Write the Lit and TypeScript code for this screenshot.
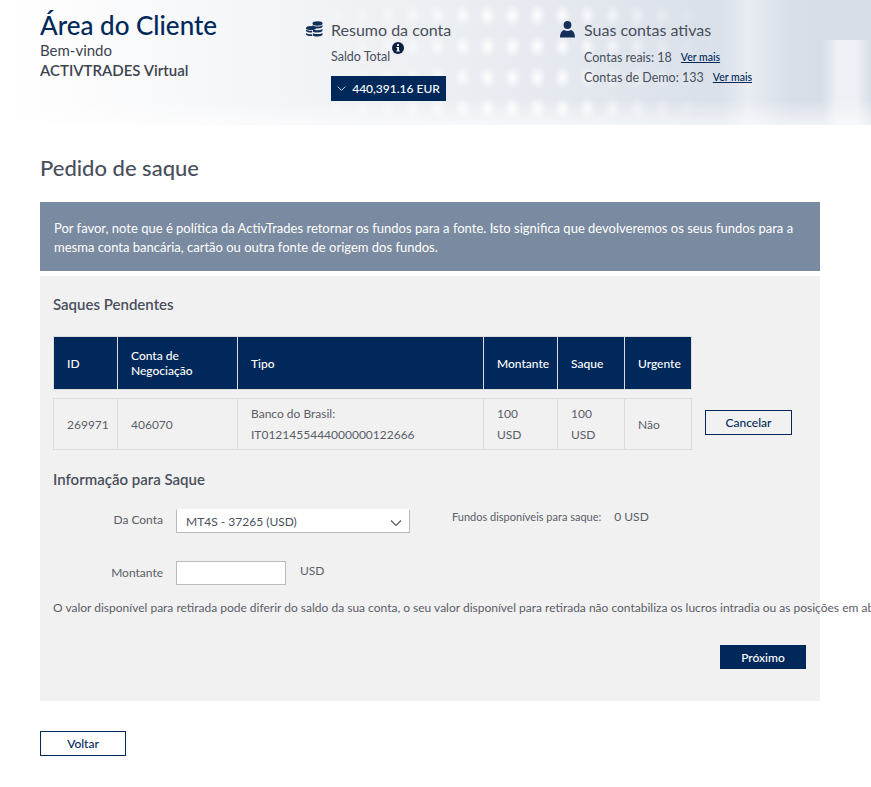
import {LitElement, css, html} from 'lit';
import {customElement} from 'lit/decorators.js';

const headers = ['ID', 'Conta de Negociação', 'Tipo', 'Montante', 'Saque', 'Urgente'];

@customElement('app-root')
export class AppRoot extends LitElement {
  static styles = css`
    :host {
      display: block;
      min-height: 787px;
      background: #fff;
      color: #4a4f5c;
      font-family: Lato, "Liberation Sans", sans-serif;
      font-size: 12px;
    }
    * { box-sizing: border-box; }

    .top {
      position: relative;
      height: 125px;
      padding: 10px 40px 0;
      display: flex;
      overflow: hidden;
      background:
        linear-gradient(90deg, transparent, rgba(255,255,255,.55) 30%, rgba(255,255,255,.55) 70%, transparent) 822px 40px / 50px 85px no-repeat,
        linear-gradient(90deg, transparent, rgba(255,255,255,.4) 40%, transparent) 720px 0 / 70px 125px no-repeat,
        linear-gradient(90deg, #fff 0, #f6f7f9 25%, #eef0f4 45%, #e6eaf0 62%, #dbe1ea 80%, #d6dde7 100%);
    }
    .dots {
      position: absolute;
      inset: 0 auto 0 300px;
      width: 420px;
      background-image: radial-gradient(ellipse 9px 12px at center, rgba(255,255,255,.9) 0, rgba(255,255,255,.35) 60%, transparent 100%);
      background-size: 25px 31px;
      -webkit-mask-image: linear-gradient(90deg, transparent, #000 45%, #000 60%, transparent);
      mask-image: linear-gradient(90deg, transparent, #000 45%, #000 60%, transparent);
    }
    .fade {
      position: absolute;
      inset: 100px 0 0 0;
      background: linear-gradient(180deg, transparent, rgba(255,255,255,.6));
    }
    .col { position: relative; }
    .welcome { width: 266px; }
    h1 {
      margin: 0;
      font-size: 26px;
      line-height: 30px;
      font-weight: 500;
      color: #00285a;
    }
    .welcome p { margin: 0; font-size: 15px; line-height: 20px; color: #3e4350; }
    .welcome p + p { font-weight: 600; }
    .welcome p:first-of-type { margin-top: 0; }

    .summary { width: 254px; padding-top: 9px; }
    .ct { display: flex; align-items: center; gap: 8px; height: 20px; font-size: 16px; color: #4a4f5c; }
    .ct svg { display: block; flex: none; }
    .sub { margin: 10px 0 0 25px; display: flex; font-size: 12.5px; line-height: 16px; }
    .info { margin: -7px 0 0 2px; }
    .balance {
      margin: 11px 0 0 25px;
      width: 115px;
      height: 25px;
      display: flex;
      align-items: center;
      justify-content: center;
      gap: 6px;
      background: #00285a;
      color: #fff;
      font-size: 12px;
      font-weight: 500;
    }
    .accounts { padding-top: 5px; }
    .accounts .ct { height: 28px; gap: 9px; }
    .accounts .line { margin: 0 0 0 24px; height: 20px; display: flex; align-items: center; gap: 9px; font-size: 12.5px; }
    .accounts .ct + .line { margin-top: 4px; }
    .accounts a { color: #00285a; font-size: 10.5px; font-weight: 500; text-decoration: underline; }

    main { padding: 30px 51px 0 40px; }
    h2 { margin: 0; font-size: 22px; line-height: 26px; font-weight: 500; color: #4a4f5c; }
    .notice {
      margin-top: 21px;
      height: 69px;
      padding: 17px 14px 0;
      background: #7a8aa0;
      color: #fff;
      font-size: 13px;
      line-height: 19px;
    }
    .panel {
      margin-top: 5px;
      height: 425px;
      padding: 19px 14px 0 13px;
      background: #f1f1f1;
    }
    h3 { margin: 0; font-size: 15px; line-height: 19px; font-weight: 600; color: #4a4f5c; }
    .pending {
      margin-top: 22px;
      display: grid;
      grid-template-columns: 65px 120px 246px 74px 67px 67px auto;
      grid-template-rows: 54px 52px;
      row-gap: 8px;
      justify-content: start;
    }
    .th, .td {
      display: flex;
      align-items: center;
      padding: 0 13px;
      margin-left: -1px;
      border: 1px solid #dcdcdc;
    }
    .th:first-child, .td.first { margin-left: 0; }
    .th { background: #00285a; color: #fff; font-weight: 500; line-height: 15px; }
    .td { line-height: 21px; color: #5a5e69; }
    .cancel {
      margin: 12px 0 0 13px;
      width: 87px;
      height: 25px;
      border: 1px solid #00285a;
      background: transparent;
      color: #00285a;
      font: 500 12px Lato, "Liberation Sans", sans-serif;
      padding: 0;
    }
    .info-title { margin-top: 20px; }
    .row { display: flex; align-items: flex-start; }
    .label { width: 110px; text-align: right; color: #5a5e69; }
    .account-row { margin-top: 20px; height: 24px; }
    .account-row .label { line-height: 22px; }
    .select {
      position: relative;
      margin-left: 13px;
      width: 234px;
      height: 24px;
      padding-left: 9px;
      display: flex;
      align-items: center;
      background: #fff;
      border: 1px solid #bbb;
      border-top-color: #fff;
      color: #4a4f5c;
    }
    .select svg { position: absolute; right: 7px; top: 7px; }
    .funds { margin-left: 42px; display: flex; gap: 13px; line-height: 16px; font-size: 11px; color: #5a5e69; }
    .funds b { font-weight: 400; font-size: 12px; }
    .amount-row { margin-top: 28px; height: 24px; }
    .amount-row .label { line-height: 24px; }
    .input { margin-left: 13px; width: 110px; height: 24px; background: #fff; border: 1px solid #bbb; }
    .currency { margin-left: 14px; line-height: 20px; color: #5a5e69; }
    .hint { margin: 15px 0 0; line-height: 16px; color: #5a5e69; white-space: nowrap; font-size: 12px; }
    .actions { margin-top: 29px; display: flex; justify-content: flex-end; }
    .next {
      width: 86px;
      height: 24px;
      border: 0;
      padding: 0;
      background: #00285a;
      color: #fff;
      font: 500 12px Lato, "Liberation Sans", sans-serif;
    }
    .back {
      display: block;
      margin-top: 30px;
      width: 86px;
      height: 25px;
      border: 1px solid #00285a;
      background: #fff;
      color: #00285a;
      font: 500 12px Lato, "Liberation Sans", sans-serif;
      padding: 0;
    }
  `;

  coins() {
    return html`<svg width="17" height="16" viewBox="0 0 17 16" fill="#14305a">
      <ellipse cx="11.5" cy="2.5" rx="5" ry="2.2"/>
      <path d="M6.5 4v1.6c0 1.1 2.2 2 5 2s5-.9 5-2V4c-1 1-3 1.5-5 1.5S7.500 5 6.500 4z"/>
      <path d="M7 8.200c1.200.7 2.800 1 4.500 1s3.600-.4 5-1.200v1.600c0 1.100-2.200 2-5 2-1.700 0-3.300-.3-4.500-.9z"/>
      <path d="M7 12.200c1.200.6 2.800.9 4.500.9s3.600-.4 5-1.200v1.700c0 1.100-2.200 2-5 2-1.700 0-3.300-.3-4.500-.9z"/>
      <ellipse cx="5" cy="7" rx="5" ry="2"/>
      <path d="M0 8.500v1.300c0 1 2.200 1.800 5 1.800.4 0 .8 0 1.200-.1V9.700c-.4.100-.8.100-1.200.1-2 0-4-.5-5-1.300z"/>
      <path d="M0 12v1.300c0 1 2.200 1.800 5 1.800.4 0 .8 0 1.200-.1v-1.800c-.4.100-.8.100-1.200.1-2 0-4-.5-5-1.300z"/>
    </svg>`;
  }

  user() {
    return html`<svg width="15" height="17" viewBox="0 0 15 17" fill="#14305a">
      <circle cx="7.500" cy="4" r="3.900"/>
      <path d="M0 16.500c0-4.200 1.800-7 4.200-7.500 1 .6 2.100.9 3.300.9s2.300-.3 3.300-.9c2.400.5 4.200 3.300 4.200 7.500z"/>
    </svg>`;
  }

  info() {
    return html`<svg class="info" width="12" height="12" viewBox="0 0 12 12">
      <circle cx="6" cy="6" r="6" fill="#0b1f45"/>
      <rect x="5" y="2.200" width="2" height="1.800" fill="#fff"/>
      <path d="M4.400 5h2.600v3.600h.8v1H4.400v-1h.8V6h-.8z" fill="#fff"/>
    </svg>`;
  }

  chevron(size: number, color: string) {
    return html`<svg width=${size} height=${size} viewBox="0 0 12 12" fill="none" stroke=${color} stroke-width="1.100">
      <path d="M1 3.500 6 8.500 11 3.500"/>
    </svg>`;
  }

  render() {
    return html`
      <header class="top">
        <div class="dots"></div>
        <div class="fade"></div>
        <div class="col welcome">
          <h1>Área do Cliente</h1>
          <p>Bem-vindo</p>
          <p>ACTIVTRADES Virtual</p>
        </div>
        <div class="col summary">
          <div class="ct">${this.coins()}<span>Resumo da conta</span></div>
          <div class="sub">Saldo Total ${this.info()}</div>
          <div class="balance">${this.chevron(9, '#fff')}<span>440,391.16 EUR</span></div>
        </div>
        <div class="col accounts">
          <div class="ct">${this.user()}<span>Suas contas ativas</span></div>
          <div class="line"><span>Contas reais: 18</span><a>Ver mais</a></div>
          <div class="line"><span>Contas de Demo: 133</span><a>Ver mais</a></div>
        </div>
      </header>
      <main>
        <h2>Pedido de saque</h2>
        <div class="notice">Por favor, note que é política da ActivTrades retornar os fundos para a fonte. Isto significa que devolveremos os seus fundos para a mesma conta bancária, cartão ou outra fonte de origem dos fundos.</div>
        <section class="panel">
          <h3>Saques Pendentes</h3>
          <div class="pending">
            ${headers.map((h) => html`<div class="th">${h}</div>`)}
            <div></div>
            <div class="td first">269971</div>
            <div class="td">406070</div>
            <div class="td">Banco do Brasil:<br>IT0121455444000000122666</div>
            <div class="td">100 USD</div>
            <div class="td">100<br>USD</div>
            <div class="td">Não</div>
            <button class="cancel">Cancelar</button>
          </div>
          <h3 class="info-title">Informação para Saque</h3>
          <div class="row account-row">
            <div class="label">Da Conta</div>
            <div class="select">MT4S - 37265 (USD)${this.chevron(12, '#555')}</div>
            <div class="funds"><span>Fundos disponíveis para saque:</span><b>0 USD</b></div>
          </div>
          <div class="row amount-row">
            <div class="label">Montante</div>
            <div class="input"></div>
            <div class="currency">USD</div>
          </div>
          <p class="hint">O valor disponível para retirada pode diferir do saldo da sua conta, o seu valor disponível para retirada não contabiliza os lucros intradia ou as posições em aberto.</p>
          <div class="actions"><button class="next">Próximo</button></div>
        </section>
        <button class="back">Voltar</button>
      </main>
    `;
  }
}
